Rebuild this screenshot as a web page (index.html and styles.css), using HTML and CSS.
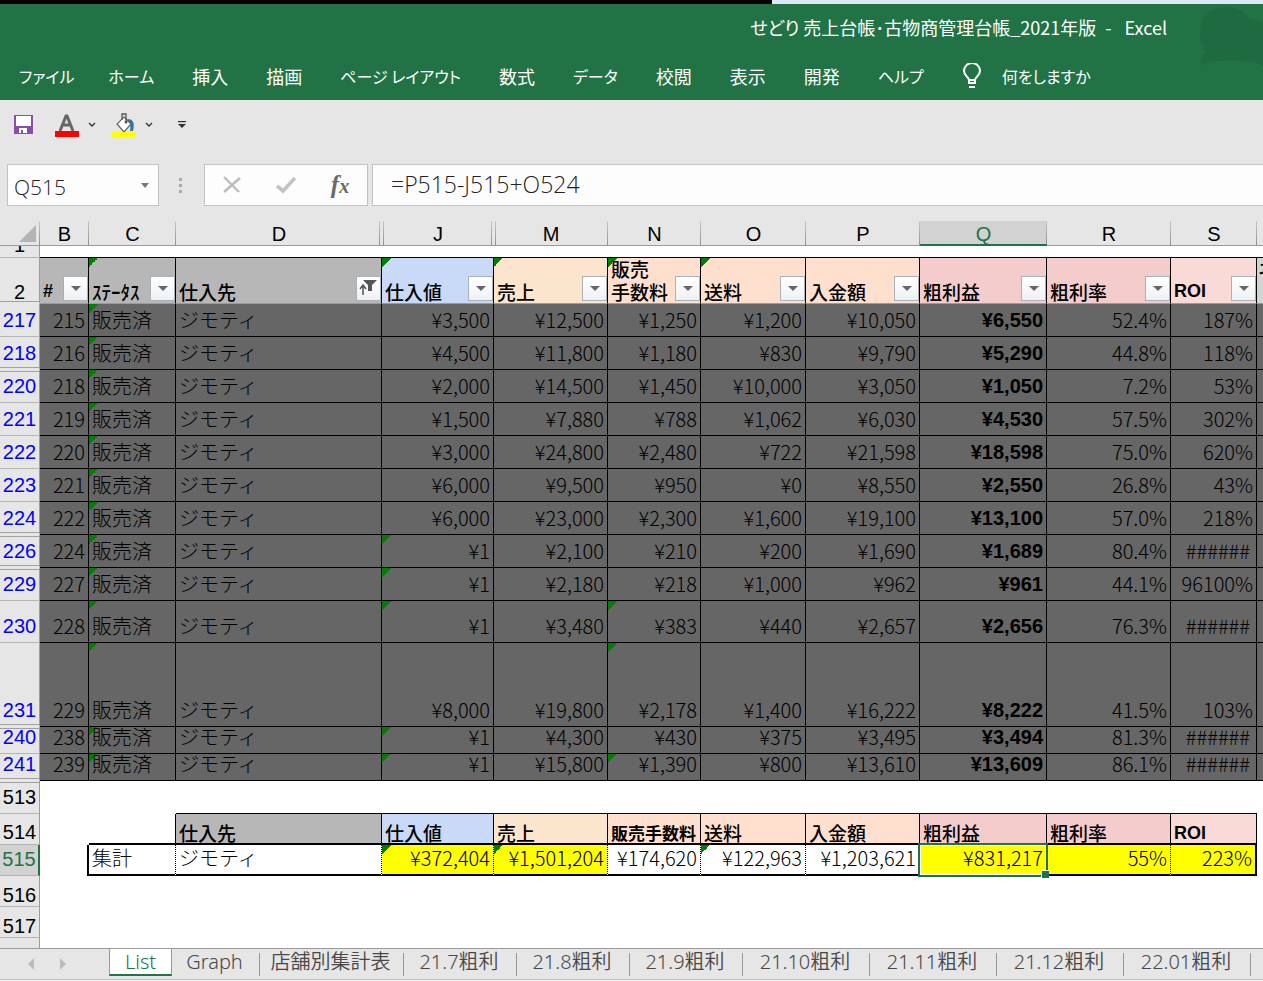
FILE: index.html
```html
<!DOCTYPE html>
<html lang="ja">
<head>
  <meta charset="UTF-8" />
  <meta name="viewport" content="width=device-width, initial-scale=1.0" />
  <title>せどり 売上台帳・古物商管理台帳_2021年版 - Excel</title>
  <link rel="stylesheet" href="styles.css">
</head>
<body>
  <div class="desktop-edge"></div>
  <header class="ribbon">
    <svg class="bubble" width="66" height="62" viewBox="0 0 66 62" aria-hidden="true">
      <path d="M6 44C1 30 2 14 14 7c12-7 30-5 37 7l15 4v44c-10-6-46-8-63-1 1-6 2-9 6-12z" fill="#206a41"/>
    </svg>
    <div class="title">せどり 売上台帳･古物商管理台帳_2021年版&ensp;-&ensp; Excel</div>
    <nav class="menu">
      <button class="kana file">ファイル</button>
      <button class="kana">ホーム</button>
      <button>挿入</button>
      <button>描画</button>
      <button class="kana">ページ レイアウト</button>
      <button>数式</button>
      <button class="kana">データ</button>
      <button>校閲</button>
      <button>表示</button>
      <button>開発</button>
      <button class="kana">ヘルプ</button>
      <button class="kana">
        <svg width="20" height="26" viewBox="0 0 20 26" fill="none" stroke="#fff" stroke-width="2" aria-hidden="true">
          <path d="M7 20v-3c0-3-5-4-5-9a8 8 0 0 1 16 0c0 5-5 6-5 9v3zM7 17h6M7 24h6"/>
        </svg>
        何をしますか
      </button>
    </nav>
  </header>

  <div class="quick">
    <button class="save" aria-label="上書き保存">
      <svg width="20" height="20" viewBox="0 0 20 20"><path d="M0 0h19v19H0z" fill="#8650a8"/><path d="M2 1h15v10H2zM5 13h8v5H9v-3H7v3H5z" fill="#fff"/></svg>
    </button>
    <button class="color" aria-label="フォントの色">
      <svg width="24" height="24" viewBox="0 0 24 24"><path d="M5 18L11 3h1l6 15M7 12h9" fill="none" stroke="#666" stroke-width="3"/><path d="M0 18h24v6H0z" fill="#f00"/></svg>
    </button>
    <button class="chev" aria-label="フォントの色の選択">
      <svg width="8" height="6" viewBox="0 0 8 6"><path d="M1 1l3 3 3-3" fill="none" stroke="#333" stroke-width="1.3"/></svg>
    </button>
    <button class="color fill" aria-label="塗りつぶしの色">
      <svg width="24" height="26" viewBox="0 0 24 26"><path d="M15 7c6 0 8 3 6 12h-3c1-5 0-8-2-10z" fill="#2e75b6"/><path d="M12 5l7 7-7 8-7-8z" fill="#fff" stroke="#666" stroke-width="1.2"/><path d="M10 8V2h4v8" fill="none" stroke="#555" stroke-width="1.3"/><circle cx="14" cy="10" r="1.5" fill="#555"/><path d="M0 20h24v6H0z" fill="#ff0"/></svg>
    </button>
    <button class="chev" aria-label="塗りつぶしの色の選択">
      <svg width="8" height="6" viewBox="0 0 8 6"><path d="M1 1l3 3 3-3" fill="none" stroke="#333" stroke-width="1.3"/></svg>
    </button>
    <button class="more" aria-label="クイック アクセス ツール バーのカスタマイズ">
      <svg width="8" height="8" viewBox="0 0 8 8"><path d="M0 0h8v1.3H0zM0 3h8L4 7z" fill="#333"/></svg>
    </button>
  </div>

  <div class="formula-bar">
    <div class="name-box">
      <input type="text" value="Q515" aria-label="名前ボックス">
      <button aria-label="名前の一覧"><svg width="8" height="5" viewBox="0 0 8 5"><path d="M0 0h8L4 5z" fill="#777"/></svg></button>
    </div>
    <div class="grip"><i></i><i></i><i></i></div>
    <div class="fx">
      <button aria-label="キャンセル"><svg width="20" height="18" viewBox="0 0 20 18"><path d="M2 1l15 15M18 2L2 16" stroke="#bdbdbd" stroke-width="2.4"/></svg></button>
      <button aria-label="入力"><svg width="20" height="18" viewBox="0 0 20 18"><path d="M1 10l6 5L19 2" fill="none" stroke="#c3c3c3" stroke-width="3.6"/></svg></button>
      <button class="fn" aria-label="関数の挿入">f<span>x</span></button>
    </div>
    <input class="formula" type="text" value="=P515-J515+O524" aria-label="数式バー">
  </div>

  <main class="sheet">
    <table>
      <colgroup>
        <col class="w-row"><col class="w-b"><col class="w-c"><col class="w-d"><col class="w-j"><col class="w-m"><col class="w-n"><col class="w-o"><col class="w-p"><col class="w-q"><col class="w-r"><col class="w-s"><col>
      </colgroup>
      <thead>
        <tr class="letters">
          <th><svg class="corner" width="17" height="17" viewBox="0 0 17 17"><path d="M17 0v17H0z" fill="#b4b4b4"/></svg></th>
          <th>B</th><th>C</th><th class="hid-right">D</th><th class="hid-left hid-right">J</th><th class="hid-left">M</th><th>N</th><th>O</th><th>P</th><th class="active">Q</th><th>R</th><th>S</th><th class="edge"></th>
        </tr>
        <tr class="r1">
          <th><div>1</div></th><td></td><td></td><td></td><td></td><td></td><td></td><td></td><td></td><td></td><td></td><td></td><td></td>
        </tr>
        <tr class="heads">
          <th class="hid-below">2</th>
          <td class="grey"><div><b>#</b><button class="filter" aria-label="# フィルター"></button></div></td>
          <td class="grey err"><div>ｽﾃｰﾀｽ<button class="filter" aria-label="ステータス フィルター"></button></div></td>
          <td class="grey"><div>仕入先<button class="filter on" aria-label="仕入先 フィルター"><svg width="19" height="17" viewBox="0 0 19 17"><path d="M4 15V6M1 9l3-4 3 4" fill="none" stroke="#555" stroke-width="1.5"/><path d="M4 0h14l-5 5v6h-4V5z" fill="#555"/></svg></button></div></td>
          <td class="blue err"><div>仕入値<button class="filter" aria-label="仕入値 フィルター"></button></div></td>
          <td class="sand err"><div>売上<button class="filter" aria-label="売上 フィルター"></button></div></td>
          <td class="peach err"><div><span>販売<br>手数料</span><button class="filter" aria-label="販売手数料 フィルター"></button></div></td>
          <td class="peach err"><div>送料<button class="filter" aria-label="送料 フィルター"></button></div></td>
          <td class="peach"><div>入金額<button class="filter" aria-label="入金額 フィルター"></button></div></td>
          <td class="rose"><div>粗利益<button class="filter" aria-label="粗利益 フィルター"></button></div></td>
          <td class="rose"><div>粗利率<button class="filter" aria-label="粗利率 フィルター"></button></div></td>
          <td class="pink"><div><b>ROI</b><button class="filter" aria-label="ROI フィルター"></button></div></td>
          <td class="mist"><div><span>ネ<br>&nbsp;</span></div></td>
        </tr>
      </thead>
      <tbody class="data">
        <tr><th>217</th><td>215</td><td class="err">販売済</td><td>ジモティ</td><td>¥3,500</td><td>¥12,500</td><td>¥1,250</td><td>¥1,200</td><td>¥10,050</td><td>¥6,550</td><td>52.4%</td><td>187%</td><td></td></tr>
        <tr><th class="hid-below">218</th><td>216</td><td class="err">販売済</td><td>ジモティ</td><td>¥4,500</td><td>¥11,800</td><td>¥1,180</td><td>¥830</td><td>¥9,790</td><td>¥5,290</td><td>44.8%</td><td>118%</td><td></td></tr>
        <tr><th class="hid-above">220</th><td>218</td><td class="err">販売済</td><td>ジモティ</td><td>¥2,000</td><td>¥14,500</td><td>¥1,450</td><td>¥10,000</td><td>¥3,050</td><td>¥1,050</td><td>7.2%</td><td>53%</td><td></td></tr>
        <tr><th>221</th><td>219</td><td class="err">販売済</td><td>ジモティ</td><td>¥1,500</td><td>¥7,880</td><td>¥788</td><td>¥1,062</td><td>¥6,030</td><td>¥4,530</td><td>57.5%</td><td>302%</td><td></td></tr>
        <tr><th>222</th><td>220</td><td class="err">販売済</td><td>ジモティ</td><td>¥3,000</td><td>¥24,800</td><td>¥2,480</td><td>¥722</td><td>¥21,598</td><td>¥18,598</td><td>75.0%</td><td>620%</td><td></td></tr>
        <tr><th>223</th><td>221</td><td class="err">販売済</td><td>ジモティ</td><td>¥6,000</td><td>¥9,500</td><td>¥950</td><td>¥0</td><td>¥8,550</td><td>¥2,550</td><td>26.8%</td><td>43%</td><td></td></tr>
        <tr><th class="hid-below">224</th><td>222</td><td class="err">販売済</td><td>ジモティ</td><td>¥6,000</td><td>¥23,000</td><td>¥2,300</td><td>¥1,600</td><td>¥19,100</td><td>¥13,100</td><td>57.0%</td><td>218%</td><td></td></tr>
        <tr><th class="hid-above hid-below">226</th><td>224</td><td class="err">販売済</td><td>ジモティ</td><td class="err">¥1</td><td>¥2,100</td><td>¥210</td><td>¥200</td><td>¥1,690</td><td>¥1,689</td><td>80.4%</td><td class="over">######</td><td></td></tr>
        <tr><th class="hid-above">229</th><td>227</td><td class="err">販売済</td><td>ジモティ</td><td class="err">¥1</td><td>¥2,180</td><td>¥218</td><td>¥1,000</td><td>¥962</td><td>¥961</td><td>44.1%</td><td>96100%</td><td></td></tr>
        <tr class="mid"><th>230</th><td>228</td><td class="err">販売済</td><td>ジモティ</td><td class="err">¥1</td><td>¥3,480</td><td class="err">¥383</td><td>¥440</td><td>¥2,657</td><td>¥2,656</td><td>76.3%</td><td class="over">######</td><td></td></tr>
        <tr class="tall"><th class="hid-below">231</th><td>229</td><td class="err">販売済</td><td>ジモティ</td><td>¥8,000</td><td>¥19,800</td><td class="err">¥2,178</td><td>¥1,400</td><td>¥16,222</td><td>¥8,222</td><td>41.5%</td><td>103%</td><td></td></tr>
        <tr class="low"><th class="hid-above">240</th><td>238</td><td class="err">販売済</td><td>ジモティ</td><td class="err">¥1</td><td>¥4,300</td><td>¥430</td><td>¥375</td><td>¥3,495</td><td>¥3,494</td><td>81.3%</td><td class="over">######</td><td></td></tr>
        <tr class="low"><th class="hid-below">241</th><td>239</td><td class="err">販売済</td><td>ジモティ</td><td class="err">¥1</td><td>¥15,800</td><td class="err">¥1,390</td><td>¥800</td><td>¥13,610</td><td>¥13,609</td><td>86.1%</td><td class="over">######</td><td></td></tr>
      </tbody>
      <tbody class="summary">
        <tr class="r513"><th class="hid-above">513</th><td></td><td></td><td></td><td></td><td></td><td></td><td></td><td></td><td></td><td></td><td></td><td></td></tr>
        <tr class="r514"><th>514</th><td></td><td></td><td class="grey">仕入先</td><td class="blue">仕入値</td><td class="sand">売上</td><td class="peach small">販売手数料</td><td class="peach">送料</td><td class="peach">入金額</td><td class="rose">粗利益</td><td class="rose">粗利率</td><td class="pink"><b>ROI</b></td><td></td></tr>
        <tr class="r515"><th>515</th><td></td><td>集計</td><td>ジモティ</td><td class="hot err">¥372,404</td><td class="hot err">¥1,501,204</td><td>¥174,620</td><td class="err">¥122,963</td><td>¥1,203,621</td><td class="hot selected">¥831,217<i class="cursor"></i></td><td class="hot">55%</td><td class="hot">223%</td><td></td></tr>
        <tr class="blank"><th>516</th><td colspan="12"></td></tr>
        <tr class="blank"><th>517</th><td colspan="12"></td></tr>
        <tr class="last"><th></th><td colspan="12"></td></tr>
      </tbody>
    </table>
  </main>

  <footer class="tabs">
    <div class="arrows">
      <button aria-label="前のシート"><svg width="6" height="12" viewBox="0 0 6 12"><path d="M6 0v12L0 6z" fill="#bbb"/></svg></button>
      <button aria-label="次のシート"><svg width="6" height="12" viewBox="0 0 6 12"><path d="M0 0v12l6-6z" fill="#bbb"/></svg></button>
    </div>
    <button class="tab current">List</button>
    <button class="tab graph">Graph</button>
    <button class="tab shop">店舗別集計表</button>
    <button class="tab">21.7粗利</button>
    <button class="tab">21.8粗利</button>
    <button class="tab">21.9粗利</button>
    <button class="tab long">21.10粗利</button>
    <button class="tab long">21.11粗利</button>
    <button class="tab long">21.12粗利</button>
    <button class="tab long">22.01粗利</button>
  </footer>
</body>
</html>
```
FILE: styles.css
```css
:root {
  --green: #217346;
  --chrome: #e6e6e6;
  --line: #9b9b9b;
  --jp: "Noto Sans CJK JP", sans-serif;
  --arial: "Liberation Sans", Arial, sans-serif;
}

* {
  box-sizing: border-box;
}

body {
  margin: 0;
  background: #f3f3f3;
  font-family: var(--jp);
  font-size: 20px;
  line-height: 20px;
  overflow: hidden;
}

button {
  padding: 0;
  border: 0;
  background: none;
  font: inherit;
  color: inherit;
  cursor: pointer;
}

svg {
  display: block;
}

.desktop-edge {
  height: 4px;
  background: linear-gradient(to right, #000 772px, #dbe9f6 772px);
}

/* ribbon */
.ribbon {
  position: relative;
  height: 96px;
  background: var(--green);
  color: #fff;
  font-size: 18px;
  font-feature-settings: "palt";
}

.bubble {
  position: absolute;
  top: 0;
  right: 0;
}

.title {
  position: relative;
  padding: 13px 96px 0 0;
  text-align: right;
  white-space: nowrap;
}

.menu {
  display: flex;
  align-items: center;
  gap: 38px;
  padding: 26px 0 0 19px;
  height: 52px;
}

.menu button {
  flex: none;
  display: flex;
  align-items: center;
  gap: 20px;
  white-space: nowrap;
}

.menu .kana {
  font-size: 16px;
}

.menu .file {
  margin-right: -4px;
}

/* quick access */
.quick {
  display: flex;
  align-items: center;
  height: 64px;
  padding: 0 0 14px 14px;
  background: var(--chrome);
}

.quick .color {
  margin-left: 21px;
}

.quick .chev {
  margin-left: 9px;
}

.quick .fill {
  margin-left: 16px;
}

.quick .more {
  margin-left: 25px;
}

/* formula bar */
.formula-bar {
  display: flex;
  height: 57px;
  padding: 0 0 15px 7px;
  background: var(--chrome);
}

.formula-bar input {
  min-width: 0;
  border: 0;
  background: none;
  font: 300 21px "Open Sans", sans-serif;
  color: #222;
  outline: none;
}

.name-box,
.fx,
.formula-bar .formula {
  border: 1px solid #c3c3c3;
  background: #fdfdfd;
}

.name-box {
  display: flex;
  width: 152px;
}

.name-box input {
  flex: 1;
  padding: 4px 0 0 6px;
}

.name-box button {
  width: 26px;
  display: grid;
  place-items: center;
}

.grip {
  display: flex;
  flex-direction: column;
  justify-content: center;
  gap: 3px;
  width: 45px;
  padding-left: 20px;
}

.grip i {
  width: 3px;
  height: 3px;
  background: #aaa;
}

.fx {
  display: flex;
  width: 164px;
}

.fx button {
  flex: 1;
  display: grid;
  place-items: center;
}

.fx .fn {
  display: block;
  font: italic bold 25px "Liberation Serif", serif;
  color: #6a6a6a;
}

.fn span {
  font-size: 20px;
}

.formula-bar .formula {
  flex: 1;
  margin-left: 4px;
  padding: 0 0 3px 18px;
  border-right: 0;
  font-size: 23px;
}

/* sheet */
.sheet {
  overflow: hidden;
  background: #fff;
}

table {
  width: 100%;
  min-width: 1263px;
  table-layout: fixed;
  border-collapse: separate;
  border-spacing: 0;
}

.w-row { width: 40px; }
.w-b { width: 49px; }
.w-c { width: 87px; }
.w-d { width: 206px; }
.w-j { width: 112px; }
.w-m { width: 114px; }
.w-n { width: 93px; }
.w-o { width: 105px; }
.w-p { width: 114px; }
.w-q { width: 127px; }
.w-r { width: 124px; }
.w-s { width: 86px; }

th,
td {
  padding: 0 3px;
  vertical-align: bottom;
  white-space: nowrap;
}

th {
  padding: 0;
  background: var(--chrome);
  font-family: var(--arial);
  font-weight: 400;
}

.letters th {
  height: 25px;
  padding-bottom: 1px;
  border-bottom: 1px solid var(--line);
  background: linear-gradient(#c8c8c8, #8f8f8f) right 0 top 0 / 1px 100% no-repeat var(--chrome);
}

.letters .hid-right {
  background-position: right 2px top 0;
}

.letters .hid-left {
  background: linear-gradient(#c8c8c8, #8f8f8f) right 0 top 0 / 1px 100% no-repeat, linear-gradient(#c8c8c8, #8f8f8f) left 1px top 0 / 1px 100% no-repeat, var(--chrome);
}

.letters .hid-left.hid-right {
  background-position: right 2px top 0, left 1px top 0, 0 0;
}

.letters .edge {
  background: var(--chrome);
}

.letters .active {
  padding-bottom: 0;
  border-bottom: 2px solid var(--green);
  background-color: #d2d2d2;
  color: var(--green);
}

.corner {
  margin: 0 0 2px 19px;
}

tr:not(.letters) > th {
  border-right: 1px solid var(--line);
  border-bottom: 1px solid #b5b5b5;
}

tr > th.hid-below {
  border-bottom-color: var(--chrome) !important;
  background: linear-gradient(#a0a0a0, #a0a0a0) left 0 bottom 1px / 100% 1px no-repeat var(--chrome);
}

tr > th.hid-above {
  background: linear-gradient(#a0a0a0, #a0a0a0) left 0 top 1px / 100% 1px no-repeat var(--chrome);
}

tr > th.hid-above.hid-below {
  background: linear-gradient(#a0a0a0, #a0a0a0) left 0 top 1px / 100% 1px no-repeat, linear-gradient(#a0a0a0, #a0a0a0) left 0 bottom 1px / 100% 1px no-repeat, var(--chrome);
}

.r1 > * {
  height: 12px;
}

.r1 div {
  display: flex;
  justify-content: center;
  align-items: flex-end;
  height: 11px;
  padding-bottom: 2px;
  overflow: hidden;
}

.r1 td {
  border-bottom: 1px solid #000;
}

/* cell fills */
.grey { background-color: #b7b7b7; }
.blue { background-color: #c9daf8; }
.sand { background-color: #fce5cd; }
.peach { background-color: #ffe0ce; }
.rose { background-color: #f4cccc; }
.pink { background-color: #fadad7; }
.mist { background-color: #d0d6d4; }
.hot { background-color: #ff0; }

/* green mark in the corner of a cell with a warning */
.err {
  background-image: linear-gradient(to bottom right, #008000 50%, transparent 50%);
  background-size: 9px 9px;
  background-repeat: no-repeat;
}

.heads > * {
  height: 46px;
}

.heads th {
  padding-bottom: 1px;
}

.heads td {
  padding: 0 0 0 3px;
  border-right: 1px solid #000;
  border-bottom: 1px solid var(--line);
  font-size: 19px;
  font-weight: 500;
  line-height: 23px;
}

.heads td:last-child {
  padding-left: 1px;
}

.heads td div {
  display: flex;
  justify-content: space-between;
  align-items: flex-end;
  height: 45px;
}

.heads b,
.r514 b {
  font-family: var(--arial);
  font-size: 18px;
}

.filter {
  flex: none;
  display: grid;
  place-items: center;
  width: 25px;
  height: 25px;
  margin-bottom: 2px;
  border: 1px solid #a9b1b8;
  background: linear-gradient(#fff, #eef1f4);
}

.filter:not(.on)::after {
  content: "";
  border: 5px solid transparent;
  border-top-color: #666;
  border-bottom: 0;
}

/* ledger rows */
.data > tr > * {
  height: 33px;
  padding-bottom: 6px;
}

.data .mid > * {
  height: 42px;
}

.data .tall > * {
  height: 84px;
}

.data .low > * {
  height: 27px;
}

.data th {
  color: #00f;
}

.data td {
  border-right: 1px solid #000;
  border-bottom: 1px solid #000;
  background-color: #666;
  text-align: right;
  font-weight: 300;
}

.data td:nth-child(3),
.data td:nth-child(4) {
  text-align: left;
}

.data td:nth-child(10) {
  font-family: var(--arial);
  font-weight: 700;
}

.data .over {
  padding-right: 6px;
}

.data td:last-child,
.heads td:last-child {
  border-right: 0;
}

/* totals */
.r513 > * {
  height: 33px;
  padding-bottom: 6px;
}

.r513 td:nth-child(n+4):not(:last-child) {
  border-bottom: 1px solid #000;
}

.r514 > * {
  height: 31px;
}

.r514 th {
  padding-bottom: 2px;
}

.r514 td {
  font-size: 19px;
  font-weight: 500;
}

.r514 td:nth-child(n+3):not(:last-child) {
  border-right: 1px solid #000;
  border-bottom: 2px solid #000;
}

.r514 .small {
  font-size: 17px;
  font-weight: 700;
}

.r515 > * {
  height: 31px;
  padding-bottom: 6px;
  font-weight: 300;
  text-align: right;
}

.r515 td:nth-child(2) {
  border-right: 2px solid #000;
}

.r515 td:nth-child(n+3):not(:last-child) {
  border-right: 1px dotted #000;
  border-bottom: 2px solid #000;
}

.r515 td:nth-child(3),
.r515 td:nth-child(4) {
  text-align: left;
}

.r515 td:nth-last-child(2) {
  border-right: 2px solid #000 !important;
}

.sheet .r515 th {
  border-right: 2px solid var(--green);
  background: #d2d2d2;
  color: var(--green);
  font-weight: 400;
  text-align: center;
}

.selected {
  position: relative;
}

.cursor {
  position: absolute;
  inset: -2px -2px -3px -2px;
  border: 2px solid var(--green);
  box-shadow: inset 0 0 0 1px #fff;
}

.cursor::after {
  content: "";
  position: absolute;
  right: -3px;
  bottom: -3px;
  width: 7px;
  height: 7px;
  border: 1px solid #fff;
  border-width: 1px 0 0 1px;
  background: var(--green);
}

.blank > * {
  height: 31px;
  padding-bottom: 1px;
}

.last > * {
  height: 10px;
}

.sheet .last th {
  border-bottom: 0;
}

/* sheet tabs */
.tabs {
  display: flex;
  height: 32px;
  border-top: 1px solid var(--line);
  border-bottom: 1px solid #c0c0c0;
  background: var(--chrome);
  color: #484848;
  font-family: "Noto Sans", var(--jp);
  font-weight: 350;
  overflow: hidden;
}

.arrows {
  flex: none;
  display: flex;
  align-items: center;
  gap: 26px;
  width: 109px;
  padding-left: 28px;
}

.tab {
  flex: none;
  width: 113px;
  height: 27px;
  padding: 0 3px 2px 0;
  background: linear-gradient(#999, #999) right 0 bottom 0 / 1px 23px no-repeat;
  white-space: nowrap;
}

.tab.long {
  width: 127px;
}

.tab.graph {
  width: 88px;
}

.tab.shop {
  width: 144px;
}

.tab.current {
  width: 63px;
  padding: 0;
  border: solid #999;
  border-width: 0 1px;
  border-bottom: 2px solid var(--green);
  background: #fff;
  color: var(--green);
}
```
